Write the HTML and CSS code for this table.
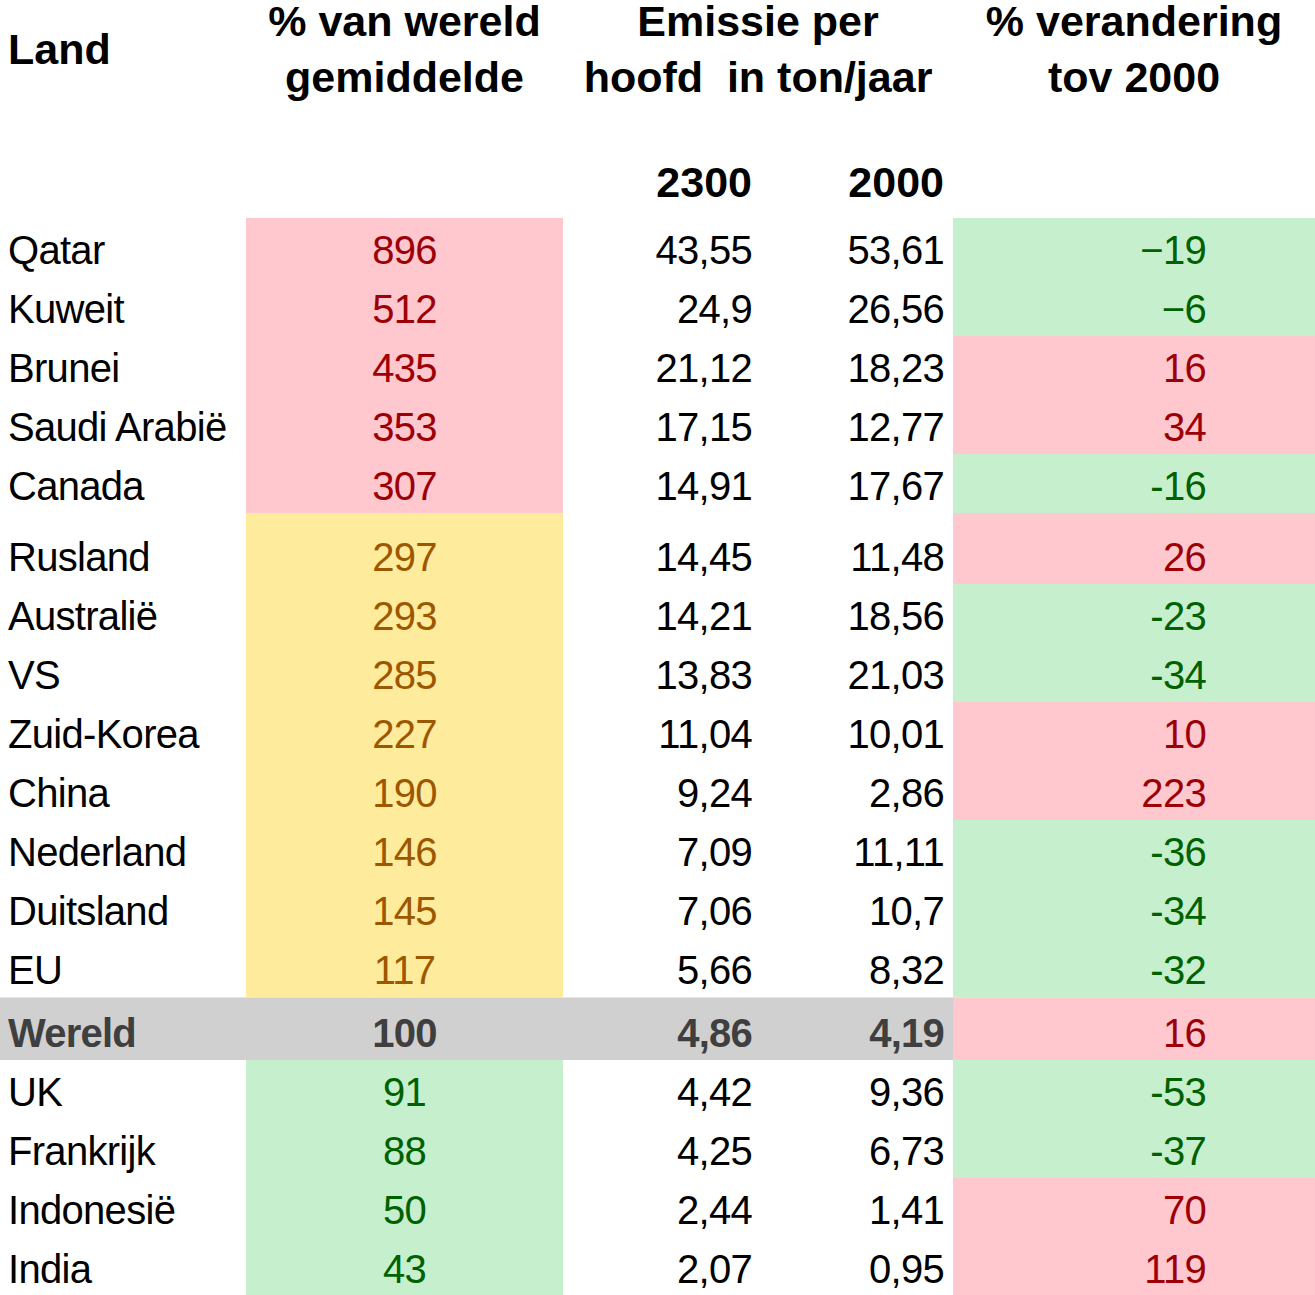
FILE: index.html
```html
<!DOCTYPE html>
<html lang="nl">
<head>
<meta charset="utf-8">
<title>Emissie per hoofd</title>
<link rel="stylesheet" href="styles.css">
</head>
<body>
<table class="sheet">
  <colgroup>
    <col class="c-land">
    <col class="c-pct">
    <col class="c-e1">
    <col class="c-e2">
    <col class="c-chg">
  </colgroup>
  <thead>
    <tr class="head1">
      <th class="land">Land</th>
      <th class="center">% van wereld<br>gemiddelde</th>
      <th class="center" colspan="2">Emissie per<br>hoofd&nbsp; in ton/jaar</th>
      <th class="center">% verandering<br>tov 2000</th>
    </tr>
    <tr class="head2">
      <th></th>
      <th></th>
      <th class="num e1">2300</th>
      <th class="num e2">2000</th>
      <th></th>
    </tr>
  </thead>
  <tbody>
    <tr><td class="land">Qatar</td><td class="pct bad">896</td><td class="num e1">43,55</td><td class="num e2">53,61</td><td class="chg good">−19</td></tr>
    <tr><td class="land">Kuweit</td><td class="pct bad">512</td><td class="num e1">24,9</td><td class="num e2">26,56</td><td class="chg good">−6</td></tr>
    <tr><td class="land">Brunei</td><td class="pct bad">435</td><td class="num e1">21,12</td><td class="num e2">18,23</td><td class="chg bad">16</td></tr>
    <tr><td class="land">Saudi Arabië</td><td class="pct bad">353</td><td class="num e1">17,15</td><td class="num e2">12,77</td><td class="chg bad">34</td></tr>
    <tr><td class="land">Canada</td><td class="pct bad">307</td><td class="num e1">14,91</td><td class="num e2">17,67</td><td class="chg good">-16</td></tr>
    <tr class="tall"><td class="land">Rusland</td><td class="pct mid">297</td><td class="num e1">14,45</td><td class="num e2">11,48</td><td class="chg bad">26</td></tr>
    <tr><td class="land">Australië</td><td class="pct mid">293</td><td class="num e1">14,21</td><td class="num e2">18,56</td><td class="chg good">-23</td></tr>
    <tr><td class="land">VS</td><td class="pct mid">285</td><td class="num e1">13,83</td><td class="num e2">21,03</td><td class="chg good">-34</td></tr>
    <tr><td class="land">Zuid-Korea</td><td class="pct mid">227</td><td class="num e1">11,04</td><td class="num e2">10,01</td><td class="chg bad">10</td></tr>
    <tr><td class="land">China</td><td class="pct mid">190</td><td class="num e1">9,24</td><td class="num e2">2,86</td><td class="chg bad">223</td></tr>
    <tr><td class="land">Nederland</td><td class="pct mid">146</td><td class="num e1">7,09</td><td class="num e2">11,11</td><td class="chg good">-36</td></tr>
    <tr><td class="land">Duitsland</td><td class="pct mid">145</td><td class="num e1">7,06</td><td class="num e2">10,7</td><td class="chg good">-34</td></tr>
    <tr><td class="land">EU</td><td class="pct mid">117</td><td class="num e1">5,66</td><td class="num e2">8,32</td><td class="chg good">-32</td></tr>
    <tr class="world"><td class="land">Wereld</td><td class="pct">100</td><td class="num e1">4,86</td><td class="num e2">4,19</td><td class="chg bad">16</td></tr>
    <tr><td class="land">UK</td><td class="pct good">91</td><td class="num e1">4,42</td><td class="num e2">9,36</td><td class="chg good">-53</td></tr>
    <tr><td class="land">Frankrijk</td><td class="pct good">88</td><td class="num e1">4,25</td><td class="num e2">6,73</td><td class="chg good">-37</td></tr>
    <tr><td class="land">Indonesië</td><td class="pct good">50</td><td class="num e1">2,44</td><td class="num e2">1,41</td><td class="chg bad">70</td></tr>
    <tr><td class="land">India</td><td class="pct good">43</td><td class="num e1">2,07</td><td class="num e2">0,95</td><td class="chg bad">119</td></tr>
  </tbody>
</table>
</body>
</html>
```

FILE: styles.css
```css
html, body {
  margin: 0;
  padding: 0;
  background: #ffffff;
  overflow: hidden;
}

body {
  font-family: "Liberation Sans", Arial, sans-serif;
  color: #000000;
}

.sheet {
  width: 1315px;
  table-layout: fixed;
  border-collapse: collapse;
  border-spacing: 0;
  margin-top: -7px;
}

.c-land { width: 246px; }
.c-pct { width: 317px; }
.c-e1 { width: 197px; }
.c-e2 { width: 193px; }
.c-chg { width: 362px; }

th, td {
  padding: 0;
  white-space: nowrap;
}

thead th {
  font-weight: bold;
  font-size: 43px;
  letter-spacing: 0;
}

.head1 th {
  height: 112px;
  line-height: 56px;
  vertical-align: middle;
}

.head1 .land {
  text-align: left;
  padding-left: 8px;
}

.head1 .center {
  text-align: center;
}

.head2 th {
  height: 113px;
  line-height: 43px;
  vertical-align: bottom;
  padding-bottom: 14px;
  box-sizing: border-box;
}

tbody td {
  height: 59px;
  font-size: 40px;
  line-height: 40px;
  letter-spacing: -0.7px;
  vertical-align: bottom;
  padding-bottom: 7px;
  box-sizing: border-box;
}

tbody tr.tall td {
  height: 71px;
}

tbody tr.world td {
  height: 63px;
}

.land {
  text-align: left;
  padding-left: 8px;
}

.pct {
  text-align: center;
}

.num {
  text-align: right;
}

.num.e1 {
  padding-right: 8px;
}

.num.e2 {
  padding-right: 9px;
}

.chg {
  text-align: right;
  padding-right: 109px;
}

.bad {
  background: #ffc7ce;
  color: #9c0006;
}

.good {
  background: #c6efce;
  color: #006100;
}

.mid {
  background: #ffeb9c;
  color: #9c5700;
}

tr.world td {
  background: #d0d0d0;
  color: #3f3f3f;
  font-weight: bold;
  letter-spacing: -0.8px;
  border-top: 1px solid #e4e4e4;
}

tr.world td.chg {
  background: #ffc7ce;
  color: #9c0006;
  font-weight: normal;
  letter-spacing: -0.7px;
}
```
